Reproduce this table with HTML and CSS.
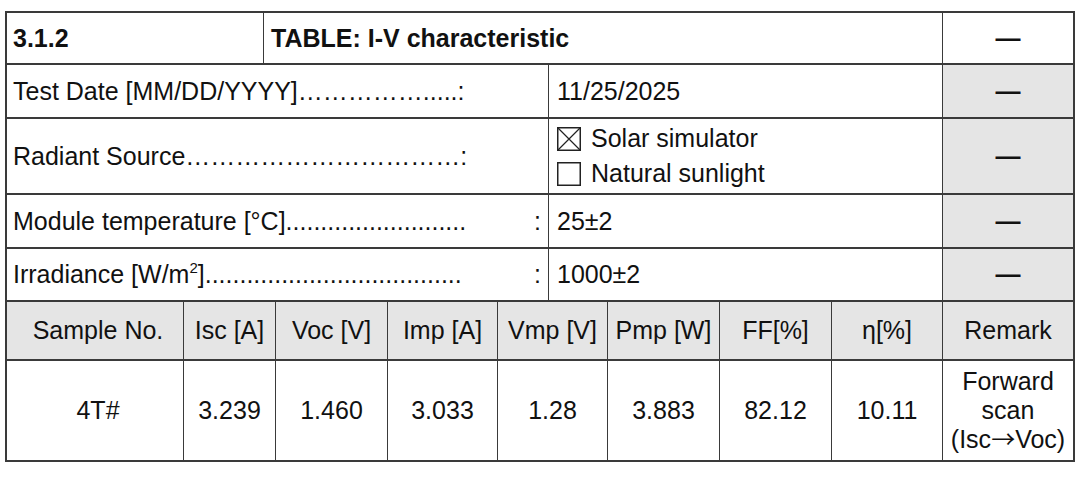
FILE: index.html
```html
<!DOCTYPE html>
<html>
<head>
<meta charset="utf-8">
<title>TABLE: I-V characteristic</title>
<link rel="stylesheet" href="styles.css">
</head>
<body>
<div class="sheet">
  <div class="row r-title">
    <div class="cell w-num bold">3.1.2</div>
    <div class="cell w-title bold">TABLE: I-V characteristic</div>
    <div class="cell w-rem center dash">—</div>
  </div>
  <div class="row r-date">
    <div class="cell w-label">Test Date [MM/DD/YYYY]…………….....:</div>
    <div class="cell w-value">11/25/2025</div>
    <div class="cell w-rem center gray dash">—</div>
  </div>
  <div class="row r-source">
    <div class="cell w-label">Radiant Source&hellip;&hellip;&hellip;&hellip;&hellip;&hellip;&hellip;&hellip;&hellip;&hellip;&hellip;:</div>
    <div class="cell w-value">
      <div class="checks">
        <div class="check">
          <svg class="box" width="24" height="24" viewBox="0 0 24 24"><rect x="0.75" y="0.75" width="22.5" height="22.5" fill="none" stroke="#222" stroke-width="1.5"/><path d="M1 1L23 23M23 1L1 23" stroke="#222" stroke-width="1.2" fill="none"/></svg>
          <span>Solar simulator</span>
        </div>
        <div class="check">
          <svg class="box" width="24" height="24" viewBox="0 0 24 24"><rect x="0.75" y="0.75" width="22.5" height="22.5" fill="none" stroke="#222" stroke-width="1.5"/></svg>
          <span>Natural sunlight</span>
        </div>
      </div>
    </div>
    <div class="cell w-rem center gray dash">—</div>
  </div>
  <div class="row r-temp">
    <div class="cell w-label split"><span>Module temperature [°C]..........................</span><span>:</span></div>
    <div class="cell w-value">25±2</div>
    <div class="cell w-rem center gray dash">—</div>
  </div>
  <div class="row r-irr">
    <div class="cell w-label split"><span>Irradiance [W/m<sup>2</sup>].....................................</span><span>:</span></div>
    <div class="cell w-value">1000±2</div>
    <div class="cell w-rem center gray dash">—</div>
  </div>
  <div class="row r-head gray">
    <div class="cell center w-c1">Sample No.</div>
    <div class="cell center w-c2">Isc [A]</div>
    <div class="cell center w-c3">Voc [V]</div>
    <div class="cell center w-c4">Imp [A]</div>
    <div class="cell center w-c5">Vmp [V]</div>
    <div class="cell center w-c6">Pmp [W]</div>
    <div class="cell center w-c7">FF[%]</div>
    <div class="cell center w-c8">η[%]</div>
    <div class="cell center w-rem">Remark</div>
  </div>
  <div class="row r-data">
    <div class="cell center w-c1">4T#</div>
    <div class="cell center w-c2">3.239</div>
    <div class="cell center w-c3">1.460</div>
    <div class="cell center w-c4">3.033</div>
    <div class="cell center w-c5">1.28</div>
    <div class="cell center w-c6">3.883</div>
    <div class="cell center w-c7">82.12</div>
    <div class="cell center w-c8">10.11</div>
    <div class="cell center w-rem"><div class="remark">Forward<br>scan<br>(Isc<span class="arrow">→</span>Voc)</div></div>
  </div>
</div>
</body>
</html>
```
FILE: styles.css
```css
* {
  box-sizing: border-box;
}

body {
  margin: 0;
  background: #ffffff;
  font-family: "Liberation Sans", Arial, sans-serif;
  font-size: 25px;
  color: #111111;
}

.sheet {
  margin: 11px 0 0 5px;
  width: 1070px;
  border: 2px solid #3a3a3a;
}

.row {
  display: flex;
  border-top: 2px solid #3a3a3a;
}

.row:first-child {
  border-top: none;
}

.cell {
  flex: none;
  display: flex;
  align-items: center;
  padding: 0 8px;
  border-left: 1px solid #3a3a3a;
  white-space: nowrap;
}

.cell:first-child {
  border-left: none;
  padding-left: 6px;
}

.center {
  justify-content: center;
  text-align: center;
  padding: 0;
}

.bold {
  font-weight: 700;
}

.dash {
  font-weight: 700;
}

.gray {
  background: #e5e5e5;
}

.split {
  justify-content: space-between;
  padding-right: 7px;
}

sup {
  font-size: 15px;
  line-height: 0;
  vertical-align: 10px;
}

/* row heights (include 2px top rule except the first) */
.r-title { height: 50px; }
.r-date { height: 54px; }
.r-source { height: 76px; }
.r-temp { height: 54px; }
.r-irr { height: 53px; }
.r-head { height: 59px; }
.r-data { height: 101px; }

/* column widths */
.w-num { width: 256px; }
.w-title { width: 679px; padding-left: 7px; }
.w-rem { width: 131px; }
.w-label { width: 541px; }
.w-value { width: 394px; }

.w-c1 { width: 176px; }
.w-c2 { width: 92px; }
.w-c3 { width: 112px; }
.w-c4 { width: 110px; }
.w-c5 { width: 110px; }
.w-c6 { width: 112px; }
.w-c7 { width: 112px; }
.w-c8 { width: 111px; }

.checks {
  display: flex;
  flex-direction: column;
}

.check {
  display: flex;
  align-items: center;
  height: 35px;
}

.box {
  flex: none;
  margin-right: 10px;
}

.remark {
  line-height: 29px;
  text-align: center;
}

.arrow {
  font-family: "Noto Sans CJK SC", sans-serif;
  font-size: 24px;
  line-height: 20px;
}
```
